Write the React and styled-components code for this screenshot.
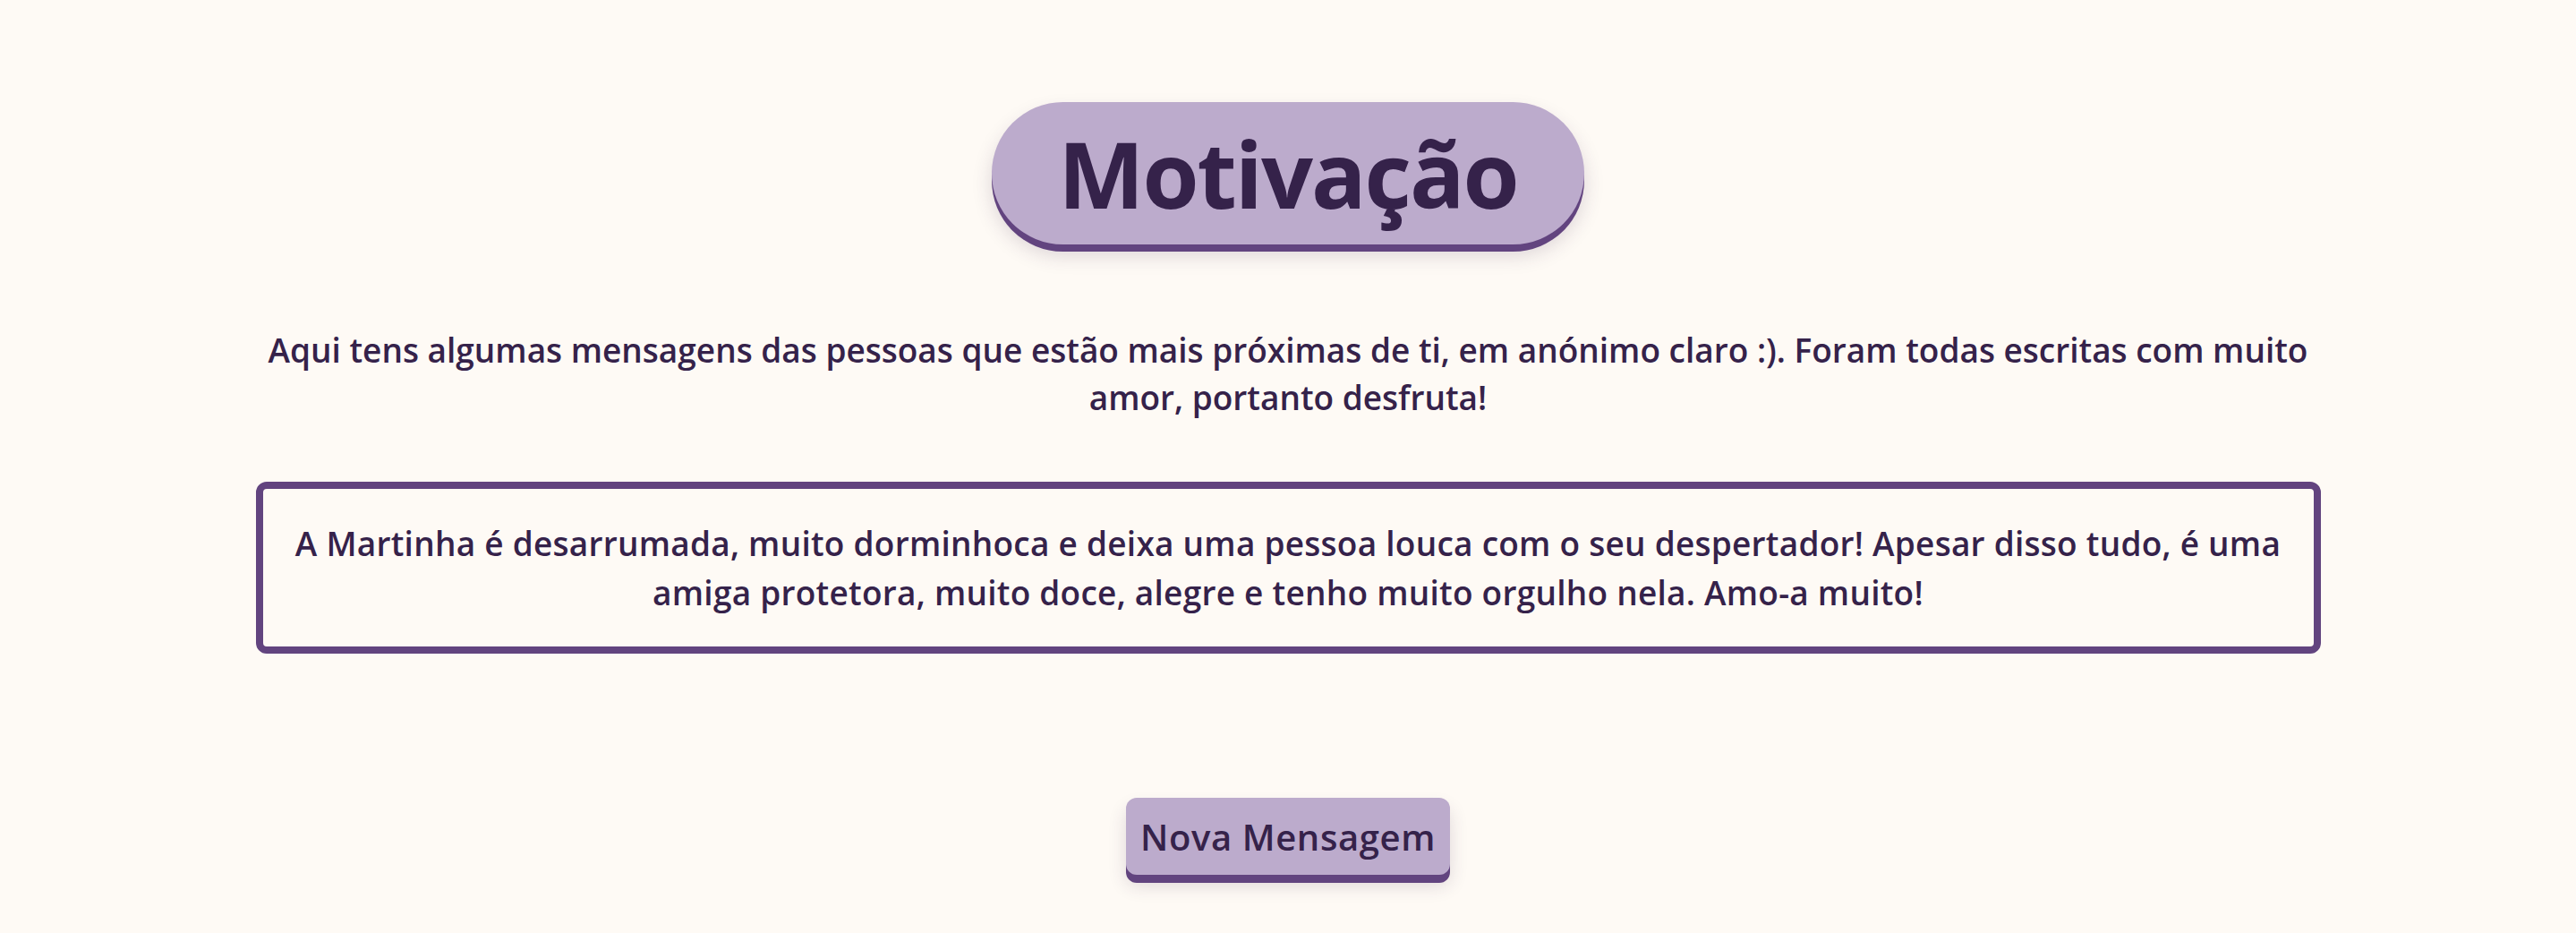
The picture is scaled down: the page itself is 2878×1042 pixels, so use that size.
import React from 'react'
import styled, { createGlobalStyle } from 'styled-components'

const GlobalStyle = createGlobalStyle`
  html, body {
    margin: 0;
    padding: 0;
    background: #fefaf5;
  }
  body {
    font-family: "Open Sans", "Lato", sans-serif;
    color: #35224a;
  }
`

const Page = styled.main`
  min-height: 100vh;
  display: flex;
  flex-direction: column;
  align-items: center;
  padding: 114px 0 40px;
  box-sizing: border-box;
`

const TitlePill = styled.h1`
  margin: 0;
  width: 662px;
  height: 159px;
  display: flex;
  align-items: center;
  justify-content: center;
  background: #bcabcc;
  border-radius: 80px;
  box-shadow: 0 8px 0 #62447f, 0 12px 22px rgba(60, 40, 80, 0.18);
  font-size: 102px;
  font-weight: 700;
  letter-spacing: -2px;
  color: #35224a;
`

const Intro = styled.p`
  margin: 91px 0 0;
  width: 2307px;
  text-align: center;
  font-size: 37px;
  font-weight: 600;
  letter-spacing: 0;
  line-height: 53px;
`

const MessageBox = styled.section`
  margin-top: 68px;
  width: 2307px;
  box-sizing: border-box;
  border: 8px solid #62447f;
  border-radius: 12px;
  padding: 33px 30px;
  text-align: center;
  font-size: 37px;
  font-weight: 600;
  letter-spacing: 0.25px;
  line-height: 55px;
`

const NewButton = styled.button`
  margin-top: 161px;
  width: 362px;
  height: 86px;
  border: none;
  border-radius: 12px;
  background: #bcabcc;
  box-shadow: 0 9px 0 #62447f, 0 12px 20px rgba(60, 40, 80, 0.16);
  font-family: "Open Sans", "Lato", sans-serif;
  font-size: 40px;
  font-weight: 600;
  letter-spacing: 0.6px;
  color: #35224a;
  cursor: pointer;
`

const App = () => {
  return (
    <>
      <GlobalStyle />
      <Page>
        <TitlePill>Motivação</TitlePill>
        <Intro>
          Aqui tens algumas mensagens das pessoas que estão mais próximas de ti, em anónimo claro :). Foram todas escritas com muito amor, portanto desfruta!
        </Intro>
        <MessageBox>
          A Martinha é desarrumada, muito dorminhoca e deixa uma pessoa louca com o seu despertador! Apesar disso tudo, é uma amiga protetora, muito doce, alegre e tenho muito orgulho nela. Amo-a muito!
        </MessageBox>
        <NewButton>Nova Mensagem</NewButton>
      </Page>
    </>
  )
}

export default App
